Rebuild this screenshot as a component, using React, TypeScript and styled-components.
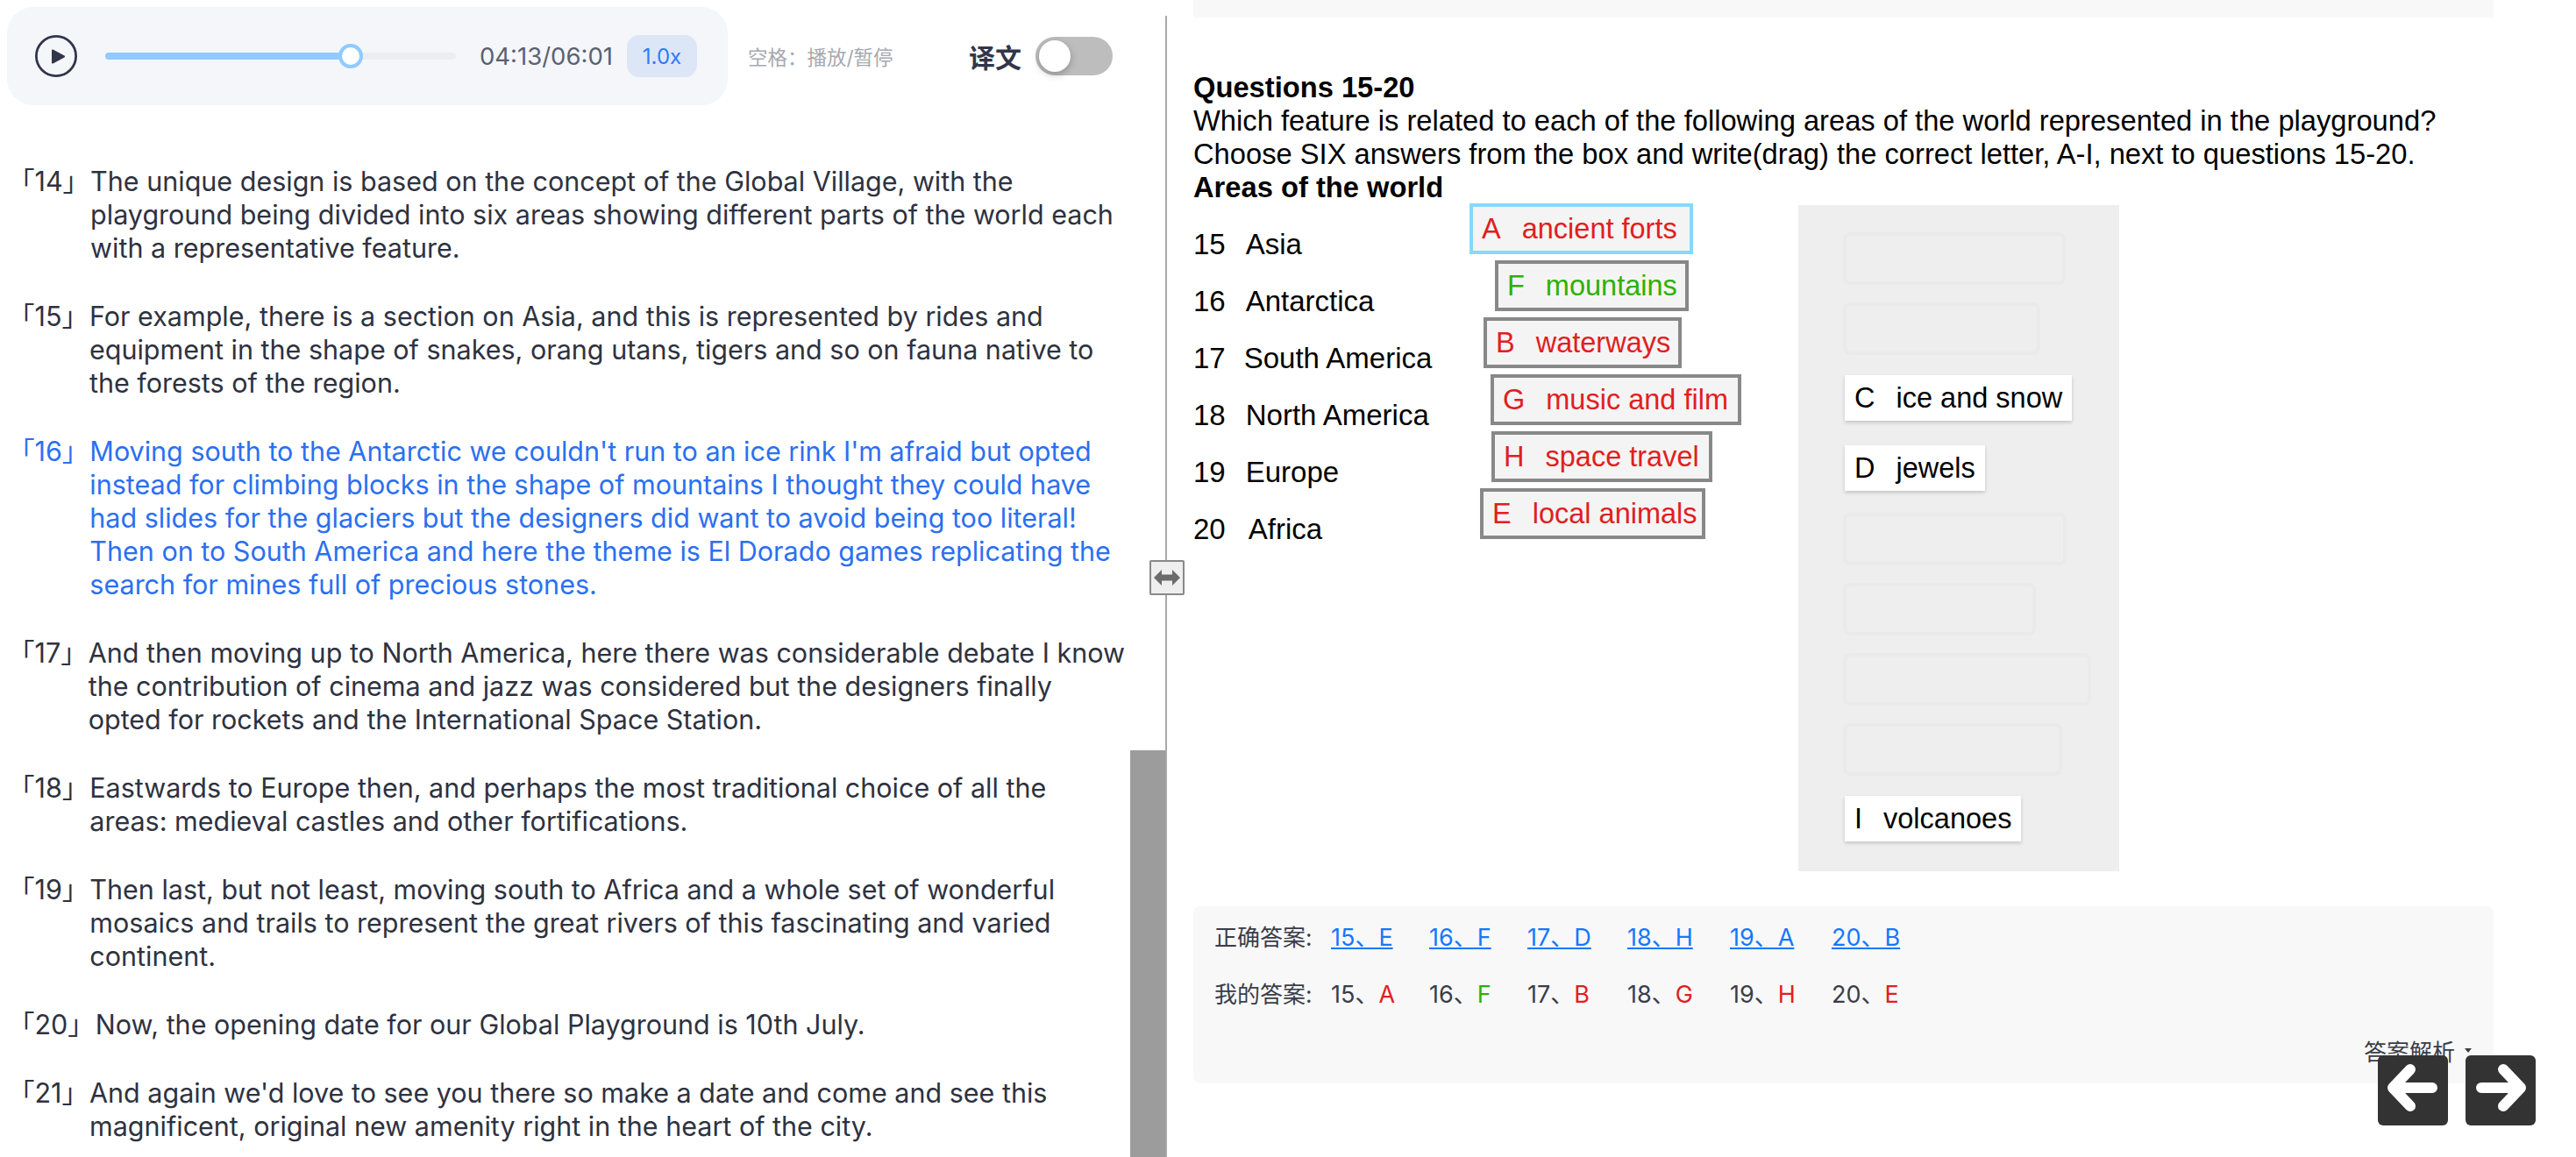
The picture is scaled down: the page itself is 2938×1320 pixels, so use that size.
import React from "react";
import styled, { createGlobalStyle } from "styled-components";

const Global = createGlobalStyle`
  html, body { margin: 0; padding: 0; background: #fff; }
  body { width: 2938px; height: 1320px; overflow: hidden; font-family: Inter, "Noto Sans CJK SC", sans-serif; }
  * { box-sizing: border-box; }
`;

const Page = styled.div`
  display: flex;
  width: 2938px;
  height: 1320px;
  overflow: hidden;
  position: relative;
`;
const LeftPanel = styled.section`
  width: 1329px;
  height: 1320px;
  flex: none;
  position: relative;
  overflow: hidden;
`;
const Header = styled.header`
  display: flex;
  align-items: center;
  padding: 8px 0 0 8px;
`;
const Player = styled.div`
  width: 822px;
  height: 112px;
  flex: none;
  display: flex;
  align-items: center;
  background: #f4f6fa;
  border-radius: 30px;
  padding-left: 32px;
`;
const PlayIcon = styled.svg`
  width: 48px;
  height: 48px;
  flex: none;
`;
const Slider = styled.div`
  width: 400px;
  height: 8px;
  margin-left: 32px;
  flex: none;
  border-radius: 4px;
  background: #ebedf0;
  position: relative;
`;
const SliderFill = styled.div`
  height: 100%;
  background: #91caff;
  border-radius: 4px;
`;
const SliderThumb = styled.div`
  position: absolute;
  top: -10px;
  width: 28px;
  height: 28px;
  margin-left: -14px;
  border-radius: 50%;
  background: #fff;
  border: 4px solid #91caff;
`;
const Time = styled.span`
  margin-left: 27px;
  font-size: 27.5px;
  color: #5b6170;
  white-space: nowrap;
`;
const Speed = styled.span`
  margin-left: 16px;
  width: 80px;
  height: 48px;
  display: flex;
  align-items: center;
  justify-content: center;
  border-radius: 14px;
  background: #dce6f7;
  color: #2f7bf5;
  font-size: 24px;
`;
const Hint = styled.span`
  margin-left: 23px;
  width: 165px;
  flex: none;
  font-size: 22.5px;
  color: #a6a9b0;
  white-space: nowrap;
`;
const ToggleLabel = styled.span`
  margin-left: 87px;
  font-size: 30px;
  font-weight: 700;
  color: #32364a;
  white-space: nowrap;
`;
const Toggle = styled.div`
  margin-left: 16px;
  width: 88px;
  height: 44px;
  border-radius: 22px;
  background: #bdbdbd;
  padding: 4px;
`;
const ToggleKnob = styled.div`
  width: 36px;
  height: 36px;
  border-radius: 50%;
  background: #fff;
  box-shadow: 0 3px 8px rgba(0, 0, 0, 0.25);
`;
const Transcript = styled.div`
  padding: 68px 40px 0 9px;
  display: flex;
  flex-direction: column;
  gap: 40px;
`;
const Para = styled.p<{ $active?: boolean }>`
  margin: 0;
  display: flex;
  font-size: 30.5px;
  line-height: 38px;
  color: ${(p) => (p.$active ? "#2b70f0" : "#2e3240")};
`;
const Marker = styled.span`
  flex: none;
  margin-right: 1px;
`;
const Scrollbar = styled.div`
  position: absolute;
  right: 0;
  bottom: 0;
  width: 40px;
  height: 464px;
  background: #9c9c9c;
`;
const Divider = styled.div`
  flex: none;
  width: 2px;
  height: 1302px;
  margin-top: 18px;
  background: #a8a8a8;
  position: relative;
`;
const Handle = styled.div`
  position: absolute;
  left: -18px;
  top: 621px;
  width: 40px;
  height: 40px;
  background: #eee;
  border: 2px solid #888;
  border-radius: 2px;
  display: flex;
  align-items: center;
  justify-content: center;
`;
const RightPanel = styled.section`
  flex: none;
  width: 1483px;
  margin-left: 30px;
  font-family: "Liberation Sans", "Noto Sans CJK SC", sans-serif;
  color: #000;
`;
const TopBand = styled.div`
  height: 20px;
  background: #f8f8f8;
`;
const Intro = styled.div`
  margin-top: 61px;
  font-size: 32.7px;
  line-height: 38px;
`;
const Strong = styled.div`
  font-weight: 700;
  font-size: 32.7px;
`;
const Exercise = styled.div`
  display: flex;
  align-items: flex-start;
  margin-top: -1px;
`;
const Questions = styled.div`
  width: 690px;
  flex: none;
`;
const QRow = styled.div`
  display: flex;
  align-items: flex-start;
  height: 65px;
`;
const QLabel = styled.div`
  margin-top: 28px;
  width: 315px;
  flex: none;
  font-size: 33px;
  line-height: 38px;
  white-space: nowrap;
`;
const QNum = styled.span<{ $gap: number }>`
  margin-right: ${(p) => p.$gap}px;
`;
const Answer = styled.div<{ $first?: boolean; $offset: number; $color: string; $w: number }>`
  margin-left: ${(p) => p.$offset}px;
  width: ${(p) => p.$w}px;
  height: 58px;
  display: flex;
  align-items: center;
  padding: 0 10px;
  flex: none;
  background: #f4f4f4;
  border: 4px solid ${(p) => (p.$first ? "#87d8fb" : "#888")};
  color: ${(p) => p.$color};
  font-size: 32.5px;
  white-space: nowrap;
`;
const Letter = styled.span`
  margin-right: 24px;
`;
const Pool = styled.div`
  width: 366px;
  height: 760px;
  margin-top: 2px;
  flex: none;
  background: #eee;
  padding: 31px 0 0 51px;
  display: flex;
  flex-direction: column;
  align-items: flex-start;
  gap: 20px;
`;
const Slot = styled.div<{ $w: number }>`
  width: ${(p) => p.$w}px;
  height: 60px;
  flex: none;
  border: 4px solid #eaeaea;
  border-radius: 8px;
`;
const Chip = styled.div`
  margin: 3px 2px 5px;
  height: 52px;
  flex: none;
  display: flex;
  align-items: center;
  padding: 0 11px;
  background: #fff;
  box-shadow: 0 2px 4px rgba(0, 0, 0, 0.18);
  font-size: 32.5px;
  white-space: nowrap;
`;
const Card = styled.div`
  margin-top: 40px;
  height: 202px;
  background: #f8f8f8;
  border-radius: 8px;
  padding: 17px 24px 0;
  font-family: Inter, "Noto Sans CJK SC", sans-serif;
  font-size: 27px;
  color: #3a3d48;
`;
const AnswerRow = styled.div`
  display: flex;
  align-items: center;
  height: 32px;
  margin-bottom: 33px;
`;
const AnswerHead = styled.span`
  width: 133px;
  flex: none;
  font-size: 26px;
`;
const AnswerCell = styled.span<{ $w: number }>`
  width: ${(p) => p.$w}px;
  flex: none;
`;
const AnswerLink = styled.a`
  color: #1677ff;
  text-decoration: underline;
`;
const Pick = styled.span<{ $ok?: boolean }>`
  color: ${(p) => (p.$ok ? "#2eb000" : "#e02020")};
`;
const Analysis = styled.div`
  position: absolute;
  left: 2696px;
  top: 1180px;
  font-family: Inter, "Noto Sans CJK SC", sans-serif;
  font-size: 26px;
  color: #3a3d48;
  display: flex;
  align-items: center;
  gap: 11px;
`;
const Caret = styled.span`
  width: 0;
  height: 0;
  border-left: 4px solid transparent;
  border-right: 4px solid transparent;
  border-top: 5px solid #3a3d48;
`;
const Nav = styled.div`
  position: absolute;
  left: 2712px;
  top: 1204px;
  display: flex;
  gap: 20px;
`;
const NavBtn = styled.button`
  width: 80px;
  height: 80px;
  padding: 0;
  border: none;
  border-radius: 6px;
  background: #333;
  display: flex;
  align-items: center;
  justify-content: center;
`;

const paras: { n: string; t: string; active?: boolean }[] = [
  { n: "「14」", t: "The unique design is based on the concept of the Global Village, with the playground being divided into six areas showing different parts of the world each with a representative feature." },
  { n: "「15」", t: "For example, there is a section on Asia, and this is represented by rides and equipment in the shape of snakes, orang utans, tigers and so on fauna native to the forests of the region." },
  { n: "「16」", t: "Moving south to the Antarctic we couldn't run to an ice rink I'm afraid but opted instead for climbing blocks in the shape of mountains I thought they could have had slides for the glaciers but the designers did want to avoid being too literal! Then on to South America and here the theme is El Dorado games replicating the search for mines full of precious stones.", active: true },
  { n: "「17」", t: "And then moving up to North America, here there was considerable debate I know the contribution of cinema and jazz was considered but the designers finally opted for rockets and the International Space Station." },
  { n: "「18」", t: "Eastwards to Europe then, and perhaps the most traditional choice of all the areas: medieval castles and other fortifications." },
  { n: "「19」", t: "Then last, but not least, moving south to Africa and a whole set of wonderful mosaics and trails to represent the great rivers of this fascinating and varied continent." },
  { n: "「20」", t: "Now, the opening date for our Global Playground is 10th July." },
  { n: "「21」", t: "And again we'd love to see you there so make a date and come and see this magnificent, original new amenity right in the heart of the city." },
];

const rows = [
  { num: "15", gap: 23, name: "Asia", l: "A", t: "ancient forts", off: 0, w: 255, c: "#e02020", first: true },
  { num: "16", gap: 23, name: "Antarctica", l: "F", t: "mountains", off: 29, w: 221, c: "#2eb000" },
  { num: "17", gap: 21, name: "South America", l: "B", t: "waterways", off: 16, w: 226, c: "#e02020" },
  { num: "18", gap: 23, name: "North America", l: "G", t: "music and film", off: 24, w: 286, c: "#e02020" },
  { num: "19", gap: 23, name: "Europe", l: "H", t: "space travel", off: 25, w: 252, c: "#e02020" },
  { num: "20", gap: 26, name: "Africa", l: "E", t: "local animals", off: 12, w: 257, c: "#e02020" },
];

const widths = [112, 112, 114, 117, 116, 100];
const correct = ["15、E", "16、F", "17、D", "18、H", "19、A", "20、B"];
const mine: [string, string, boolean?][] = [
  ["15、", "A"],
  ["16、", "F", true],
  ["17、", "B"],
  ["18、", "G"],
  ["19、", "H"],
  ["20、", "E"],
];

export default function App() {
  return (
    <Page>
      <Global />
      <LeftPanel>
        <Header>
          <Player>
            <PlayIcon viewBox="0 0 48 48">
              <circle cx="24" cy="24" r="22.6" fill="none" stroke="#32364a" strokeWidth="2.8" />
              <path d="M20 17.5 L33 24.5 L20 31.5 Z" fill="#32364a" stroke="#32364a" strokeWidth="2" strokeLinejoin="round" />
            </PlayIcon>
            <Slider>
              <SliderFill style={{ width: "70%" }} />
              <SliderThumb style={{ left: "70%" }} />
            </Slider>
            <Time>04:13/06:01</Time>
            <Speed>1.0x</Speed>
          </Player>
          <Hint>{"空格\uFF1A播放/暂停"}</Hint>
          <ToggleLabel>译文</ToggleLabel>
          <Toggle>
            <ToggleKnob />
          </Toggle>
        </Header>
        <Transcript>
          {paras.map((p) => (
            <Para key={p.n} $active={p.active}>
              <Marker>{p.n}</Marker>
              <span>{p.t}</span>
            </Para>
          ))}
        </Transcript>
        <Scrollbar />
      </LeftPanel>
      <Divider>
        <Handle>
          <svg width="32" height="20" viewBox="0 0 32 20">
            <path d="M1 10 L10 1 V6.5 H22 V1 L31 10 L22 19 V13.5 H10 V19 Z" fill="#6b6b6b" />
          </svg>
        </Handle>
      </Divider>
      <RightPanel>
        <TopBand />
        <Intro>
          <Strong>Questions 15-20</Strong>
          <div>Which feature is related to each of the following areas of the world represented in the playground?</div>
          <div>Choose SIX answers from the box and write(drag) the correct letter, A-I, next to questions 15-20.</div>
          <Strong>Areas of the world</Strong>
        </Intro>
        <Exercise>
          <Questions>
            {rows.map((r) => (
              <QRow key={r.l}>
                <QLabel>
                  <QNum $gap={r.gap}>{r.num}</QNum>
                  {r.name}
                </QLabel>
                <Answer $first={r.first} $offset={r.off} $w={r.w} $color={r.c}>
                  <Letter>{r.l}</Letter>
                  {r.t}
                </Answer>
              </QRow>
            ))}
          </Questions>
          <Pool>
            <Slot $w={254} />
            <Slot $w={225} />
            <Chip><Letter>C</Letter>ice and snow</Chip>
            <Chip><Letter>D</Letter>jewels</Chip>
            <Slot $w={255} />
            <Slot $w={220} />
            <Slot $w={283} />
            <Slot $w={250} />
            <Chip><Letter>I</Letter>volcanoes</Chip>
          </Pool>
        </Exercise>
        <Card>
          <AnswerRow>
            <AnswerHead>{"正确答案:"}</AnswerHead>
            {correct.map((c, i) => (
              <AnswerCell key={c} $w={widths[i]}>
                <AnswerLink>{c}</AnswerLink>
              </AnswerCell>
            ))}
          </AnswerRow>
          <AnswerRow>
            <AnswerHead>{"我的答案:"}</AnswerHead>
            {mine.map((m, i) => (
              <AnswerCell key={m[0]} $w={widths[i]}>
                {m[0]}
                <Pick $ok={m[2]}>{m[1]}</Pick>
              </AnswerCell>
            ))}
          </AnswerRow>
        </Card>
      </RightPanel>
      <Analysis>
        答案解析
        <Caret />
      </Analysis>
      <Nav>
        <NavBtn aria-label="previous">
          <svg width="80" height="80" viewBox="0 0 80 80">
            <path d="M37 16 L17 37 L37 58 M17 37 H62" fill="none" stroke="#fff" strokeWidth="12" strokeLinecap="round" strokeLinejoin="round" />
          </svg>
        </NavBtn>
        <NavBtn aria-label="next">
          <svg width="80" height="80" viewBox="0 0 80 80">
            <path d="M43 16 L63 37 L43 58 M63 37 H18" fill="none" stroke="#fff" strokeWidth="12" strokeLinecap="round" strokeLinejoin="round" />
          </svg>
        </NavBtn>
      </Nav>
    </Page>
  );
}
